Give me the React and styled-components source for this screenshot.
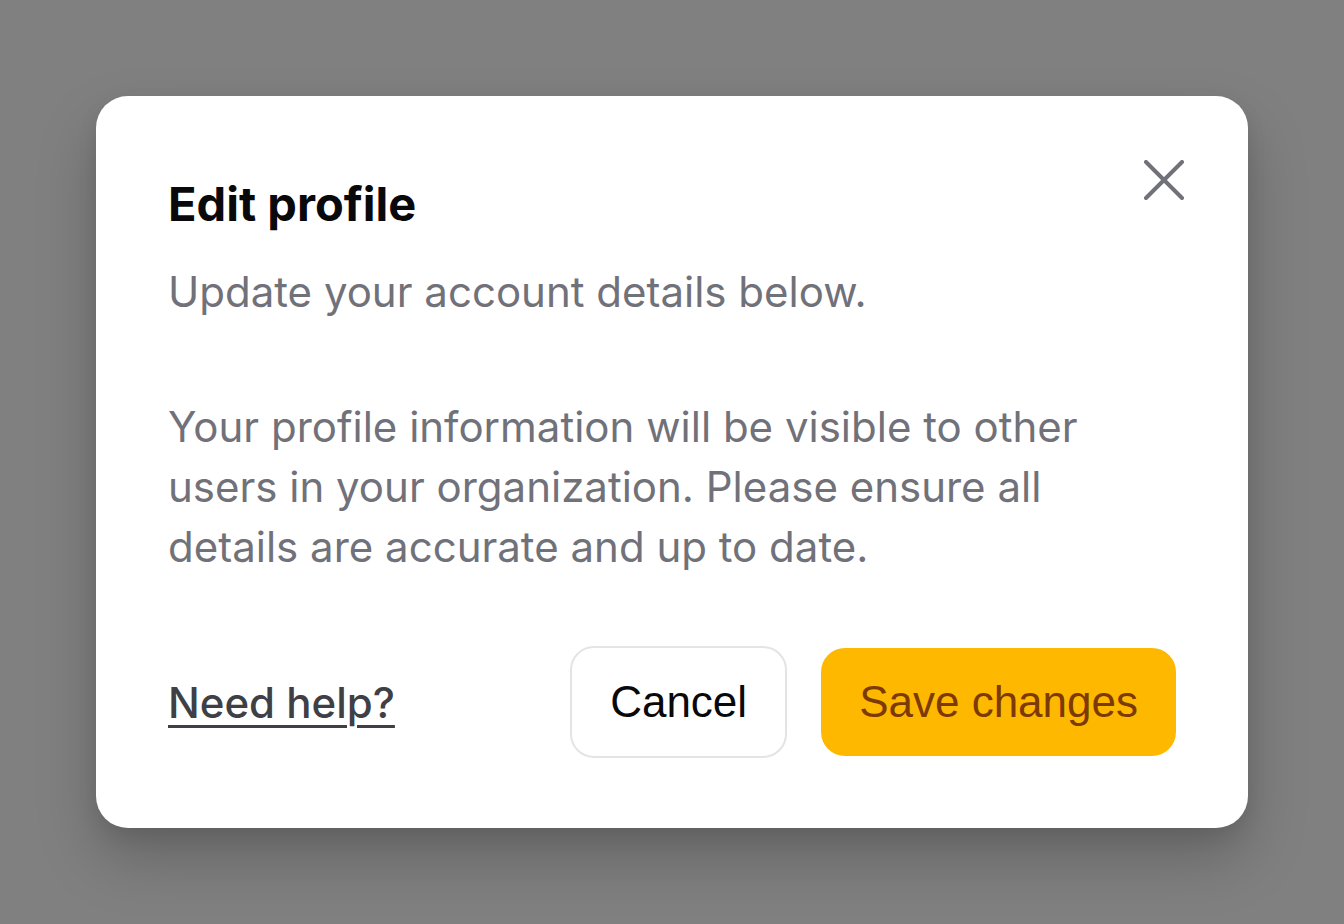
import styled, { createGlobalStyle } from "styled-components";

const GlobalStyle = createGlobalStyle`
  * {
    box-sizing: border-box;
  }
  html, body {
    margin: 0;
    padding: 0;
    height: 100%;
  }
  body {
    background: #808080;
    font-family: Inter, "Noto Sans", sans-serif;
  }
  #root {
    height: 100%;
  }
`;

const Overlay = styled.div`
  height: 100vh;
  display: flex;
  align-items: center;
  justify-content: center;
`;

const Dialog = styled.div`
  position: relative;
  width: 1152px;
  background: #fff;
  border-radius: 32px;
  padding: 72px 72px 70px;
  box-shadow: 0 30px 60px rgba(0, 0, 0, 0.22), 0 8px 20px rgba(0, 0, 0, 0.08);
`;

const Title = styled.h2`
  margin: 0;
  font-size: 47px;
  line-height: 72px;
  font-weight: 700;
  color: #09090b;
`;

const Text = styled.p`
  margin: ${(props) => props.$gap} 0 0;
  font-size: 42px;
  line-height: 60px;
  color: #71717a;
  max-width: 980px;
`;

const CloseButton = styled.button`
  position: absolute;
  top: 64px;
  right: 64px;
  width: 40px;
  height: 40px;
  padding: 0;
  border: none;
  background: none;
  cursor: pointer;
  display: flex;
`;

const Footer = styled.div`
  display: flex;
  align-items: center;
  margin-top: 69px;
`;

const HelpLink = styled.a`
  font-size: 42px;
  font-weight: 500;
  color: #3f3f46;
  text-decoration: underline;
  text-underline-offset: 7px;
  text-decoration-thickness: 3px;
  cursor: pointer;
`;

const Actions = styled.div`
  display: flex;
  align-items: center;
  gap: 34px;
  margin-left: auto;
`;

const Button = styled.button`
  font-family: "Liberation Sans", Arial, sans-serif;
  font-size: 44px;
  line-height: 52px;
  padding: 28px 38px;
  border-radius: 24px;
  cursor: pointer;
  border: ${(props) => (props.$primary ? "none" : "2px solid #e4e4e7")};
  background: ${(props) => (props.$primary ? "#ffb800" : "#fff")};
  color: ${(props) => (props.$primary ? "#7c3a06" : "#09090b")};
`;

export default function App() {
  return (
    <>
      <GlobalStyle />
      <Overlay>
        <Dialog>
          <CloseButton aria-label="Close">
            <svg width="40" height="40" viewBox="0 0 40 40" fill="none">
              <path
                d="M2 2L38 38M38 2L2 38"
                stroke="#71717a"
                strokeWidth="4"
                strokeLinecap="round"
              />
            </svg>
          </CloseButton>
          <Title>Edit profile</Title>
          <Text $gap="22px">Update your account details below.</Text>
          <Text $gap="75px">
            Your profile information will be visible to other users in your
            organization. Please ensure all details are accurate and up to date.
          </Text>
          <Footer>
            <HelpLink>Need help?</HelpLink>
            <Actions>
              <Button>Cancel</Button>
              <Button $primary>Save changes</Button>
            </Actions>
          </Footer>
        </Dialog>
      </Overlay>
    </>
  );
}
